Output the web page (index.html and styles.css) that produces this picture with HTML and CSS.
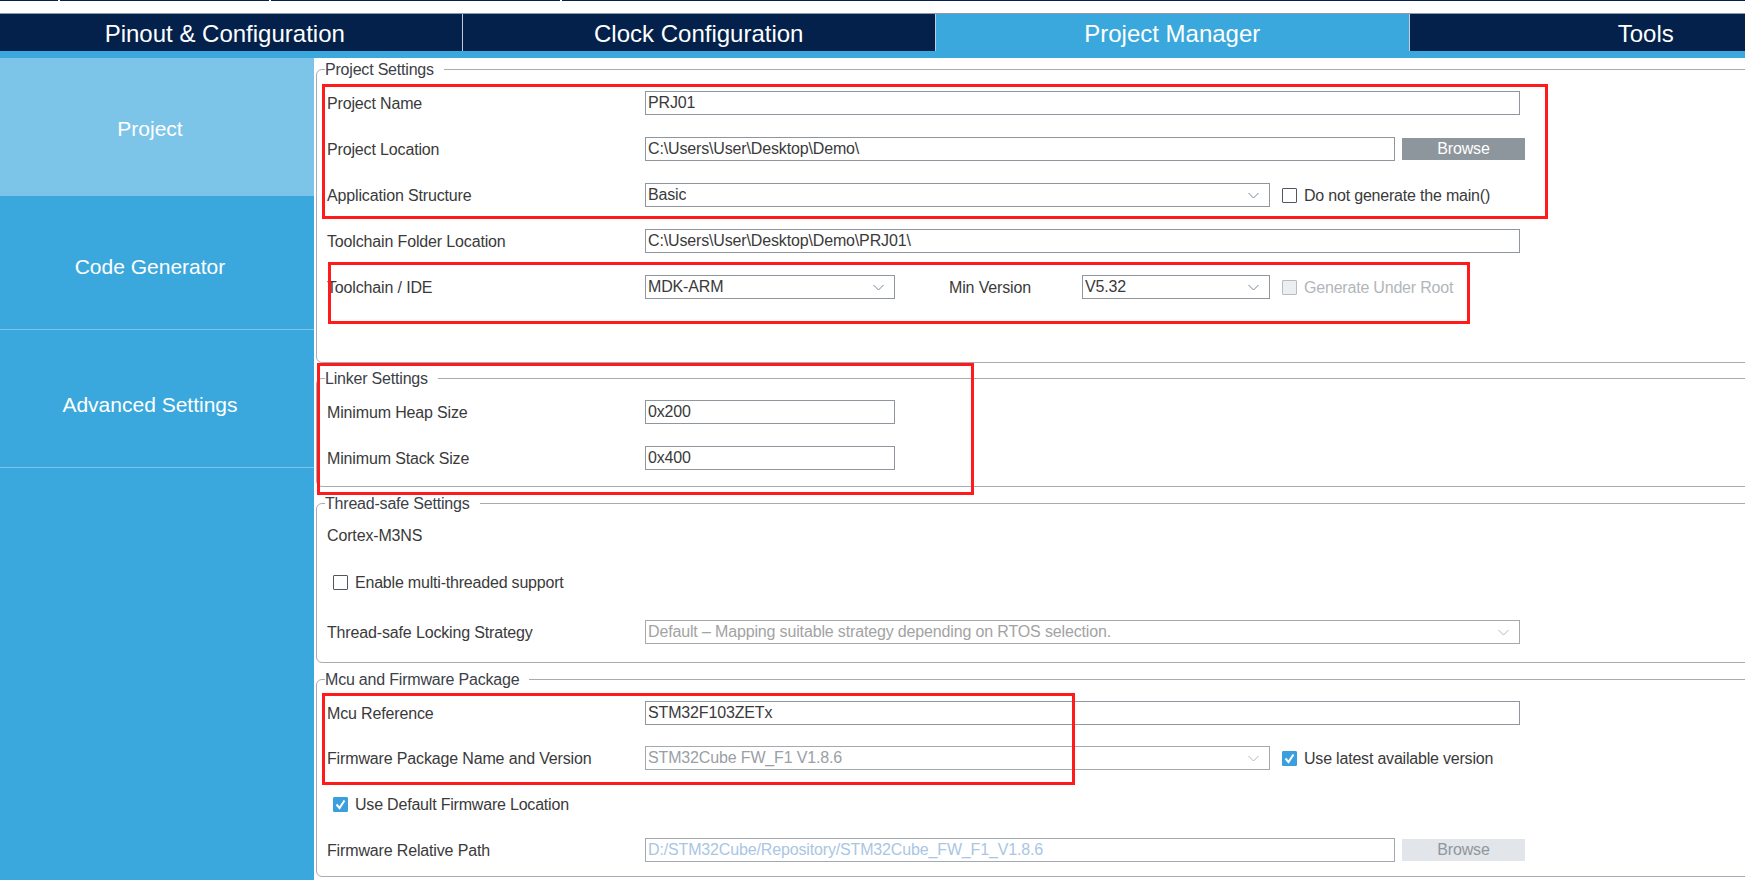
FILE: index.html
```html
<!DOCTYPE html>
<html lang="en">
<head>
<meta charset="utf-8">
<title>Project Manager</title>
<link rel="stylesheet" href="styles.css">
</head>
<body>
<div class="app">
  <div class="topline">
    <span class="seg s1"></span><span class="seg s2"></span><span class="seg s3"></span><span class="seg s4"></span>
  </div>
  <div class="tabbar">
    <div class="tab">Pinout &amp; Configuration</div>
    <div class="tab">Clock Configuration</div>
    <div class="tab active">Project Manager</div>
    <div class="tab">Tools</div>
  </div>
  <div class="strip"></div>
  <div class="main">
    <nav class="sidebar">
      <div class="nav-item active">Project</div>
      <div class="nav-item code">Code Generator</div>
      <div class="nav-item adv">Advanced Settings</div>
    </nav>
    <section class="content">
      <fieldset class="fs fs1">
        <legend>Project Settings</legend>
        <div class="row">
          <div class="label">Project Name</div>
          <div class="field w-full">PRJ01</div>
        </div>
        <div class="row">
          <div class="label">Project Location</div>
          <div class="field w-loc">C:\Users\User\Desktop\Demo\</div>
          <div class="btn">Browse</div>
        </div>
        <div class="row">
          <div class="label">Application Structure</div>
          <div class="field select w-sel"><span>Basic</span><svg class="chev" width="11" height="7" viewBox="0 0 11 7"><polyline points="0.5,1 5.5,6 10.5,1" fill="none" stroke="#7d858d" stroke-width="1"/></svg></div>
          <span class="check"></span><span class="check-text">Do not generate the main()</span>
        </div>
        <div class="row">
          <div class="label">Toolchain Folder Location</div>
          <div class="field w-full">C:\Users\User\Desktop\Demo\PRJ01\</div>
        </div>
        <div class="row">
          <div class="label">Toolchain / IDE</div>
          <div class="field select w-small"><span>MDK-ARM</span><svg class="chev" width="11" height="7" viewBox="0 0 11 7"><polyline points="0.5,1 5.5,6 10.5,1" fill="none" stroke="#7d858d" stroke-width="1"/></svg></div>
          <div class="minlabel">Min Version</div>
          <div class="field select w-ver"><span>V5.32</span><svg class="chev" width="11" height="7" viewBox="0 0 11 7"><polyline points="0.5,1 5.5,6 10.5,1" fill="none" stroke="#7d858d" stroke-width="1"/></svg></div>
          <span class="check disabled"></span><span class="check-text dim">Generate Under Root</span>
        </div>
      </fieldset>

      <fieldset class="fs fs2">
        <legend>Linker Settings</legend>
        <div class="row">
          <div class="label">Minimum Heap Size</div>
          <div class="field w-small">0x200</div>
        </div>
        <div class="row">
          <div class="label">Minimum Stack Size</div>
          <div class="field w-small">0x400</div>
        </div>
      </fieldset>

      <fieldset class="fs fs3">
        <legend>Thread-safe Settings</legend>
        <div class="row r42">
          <div class="label">Cortex-M3NS</div>
        </div>
        <div class="row r52">
          <span class="check indent"></span><span class="check-text">Enable multi-threaded support</span>
        </div>
        <div class="row r48">
          <div class="label">Thread-safe Locking Strategy</div>
          <div class="field select w-full off"><span class="muted">Default – Mapping suitable strategy depending on RTOS selection.</span><svg class="chev" width="11" height="7" viewBox="0 0 11 7"><polyline points="0.5,1 5.5,6 10.5,1" fill="none" stroke="#b3b8bd" stroke-width="1"/></svg></div>
        </div>
      </fieldset>

      <fieldset class="fs fs4">
        <legend>Mcu and Firmware Package</legend>
        <div class="row r45">
          <div class="label">Mcu Reference</div>
          <div class="field w-full">STM32F103ZETx</div>
        </div>
        <div class="row">
          <div class="label">Firmware Package Name and Version</div>
          <div class="field select w-sel off"><span class="muted2">STM32Cube FW_F1 V1.8.6</span><svg class="chev" width="11" height="7" viewBox="0 0 11 7"><polyline points="0.5,1 5.5,6 10.5,1" fill="none" stroke="#b3b8bd" stroke-width="1"/></svg></div>
          <span class="check on"><svg width="13" height="13" viewBox="0 0 13 13"><polyline points="2.5,6.5 5.5,10 10.5,2.5" fill="none" stroke="#fff" stroke-width="2"/></svg></span><span class="check-text">Use latest available version</span>
        </div>
        <div class="row">
          <span class="check on indent"><svg width="13" height="13" viewBox="0 0 13 13"><polyline points="2.5,6.5 5.5,10 10.5,2.5" fill="none" stroke="#fff" stroke-width="2"/></svg></span><span class="check-text">Use Default Firmware Location</span>
        </div>
        <div class="row">
          <div class="label">Firmware Relative Path</div>
          <div class="field w-loc off"><span class="muted-blue">D:/STM32Cube/Repository/STM32Cube_FW_F1_V1.8.6</span></div>
          <div class="btn disabled">Browse</div>
        </div>
      </fieldset>
    </section>
  </div>

  <div class="mark m1"></div>
  <div class="mark m2"></div>
  <div class="mark m3"></div>
  <div class="mark m4"></div>
</div>
</body>
</html>
```

FILE: styles.css
```css
* { box-sizing: border-box; }

html, body {
  margin: 0;
  padding: 0;
  background: #ffffff;
}

body {
  font-family: "Liberation Sans", Arial, sans-serif;
  color: #3a3a3a;
}

.app {
  position: relative;
  width: 1745px;
  height: 880px;
  overflow: hidden;
  background: #ffffff;
}

/* thin top line */
.topline {
  display: flex;
  gap: 2px;
  height: 13px;
}
.seg {
  display: block;
  height: 13px;
  border-top: 1px solid #03214a;
}
.s1 { width: 58px; }
.s2 { width: 209px; }
.s3 { width: 289px; }
.s4 { flex: 1; }

/* main tab bar */
.tabbar {
  display: flex;
  height: 38px;
  margin-left: -12px;
  border-top: 1px solid #8e9aab;
}
.tab {
  flex: 0 0 473.5px;
  display: flex;
  align-items: center;
  justify-content: center;
  background: #03214a;
  color: #ffffff;
  font-size: 24px;
  padding-top: 3px;
}
.tab + .tab {
  border-left: 1px solid #c3ccd6;
}
.tab.active {
  background: #3aa8dc;
}

.strip {
  height: 7px;
  background: #3aa8dc;
}

.main {
  display: flex;
  height: 822px;
}

/* left navigation */
.sidebar {
  flex: 0 0 314px;
  background: #3aa8dc;
}
.nav-item {
  display: flex;
  align-items: center;
  justify-content: center;
  color: #ffffff;
  font-size: 21px;
  padding-right: 14px;
}
.nav-item.active {
  height: 138px;
  padding-top: 4px;
  background: #7cc5e9;
}
.nav-item.code {
  height: 134px;
  padding-top: 8px;
  border-bottom: 1px solid #7cc5e9;
}
.nav-item.adv {
  height: 138px;
  padding-top: 12px;
  border-bottom: 1px solid #7cc5e9;
}

/* content */
.content {
  flex: 1;
  min-width: 0;
  padding-left: 2px;
  overflow: hidden;
  background: #ffffff;
}

.fs {
  margin: 5px -12px 0 0;
  padding: 0 0 5px 10px;
  border: 1px solid #a6acb3;
  border-radius: 6px;
  min-width: 0;
}
.fs1 { margin-top: 0; padding-bottom: 52px; }
.fs2 { margin-top: 4px; padding-bottom: 5px; }
.fs3 { padding-bottom: 6px; }
.fs4 { padding-bottom: 3px; }

.fs legend {
  margin-left: -2px;
  padding: 2px 10px 0 0;
  font-size: 16px;
  line-height: 20px;
  letter-spacing: -0.2px;
  color: #3c4047;
}

.row {
  display: flex;
  align-items: center;
  height: 46px;
  font-size: 16px;
  letter-spacing: -0.15px;
}
.r42 { height: 42px; }
.r45 { height: 45px; }
.r48 { height: 48px; }
.r52 { height: 52px; }

.label {
  flex: 0 0 318px;
  white-space: nowrap;
  color: #3a3a3a;
  padding-top: 2px;
}

.field {
  height: 24px;
  border: 1px solid #8f969d;
  padding: 0 2px;
  line-height: 22px;
  font-size: 16px;
  color: #3a3a3a;
  white-space: nowrap;
  overflow: hidden;
  background: #ffffff;
  flex-shrink: 0;
}
.field.off {
  border-color: #a3a9af;
}
.select {
  display: flex;
  align-items: center;
  justify-content: space-between;
}
.select span {
  overflow: hidden;
}
.chev {
  flex-shrink: 0;
  margin-right: 8px;
  margin-top: 1px;
}

.w-full { width: 875px; }
.w-loc { width: 750px; }
.w-sel { width: 625px; }
.w-small { width: 250px; }
.w-ver { width: 188px; }

.muted { color: #a3a3a3; }
.muted2 { color: #9aa0a6; }
.muted-blue { color: #a9c6e4; }

.btn {
  flex: 0 0 123px;
  height: 22px;
  margin-left: 7px;
  display: flex;
  align-items: center;
  justify-content: center;
  background: #8e969d;
  color: #ffffff;
  font-size: 16px;
}
.btn.disabled {
  background: #e2e5e9;
  color: #8f969d;
}

.minlabel {
  flex: 0 0 133px;
  margin-left: 54px;
  white-space: nowrap;
  padding-top: 2px;
}

.check {
  flex: 0 0 15px;
  width: 15px;
  height: 15px;
  margin-left: 12px;
  border: 1px solid #50575e;
  border-radius: 1px;
  background: #ffffff;
  display: flex;
  align-items: center;
  justify-content: center;
}
.check.indent { margin-left: 6px; }
.check.disabled {
  background: #eceef1;
  border-color: #b7bcc1;
}
.check.on {
  background: #3a9fdc;
  border-color: #3a9fdc;
}
.check-text {
  margin-left: 7px;
  padding-top: 2px;
  white-space: nowrap;
  color: #3a3a3a;
  letter-spacing: -0.2px;
}
.check-text.dim {
  color: #b2b6ba;
}

/* red annotation rectangles over the screenshot */
.mark {
  position: absolute;
  border: 3px solid #ff1b1b;
  pointer-events: none;
}
.m1 { left: 322px; top: 84px; width: 1226px; height: 135px; }
.m2 { left: 328px; top: 262px; width: 1142px; height: 62px; }
.m3 { left: 317px; top: 363px; width: 657px; height: 132px; }
.m4 { left: 322px; top: 693px; width: 753px; height: 92px; }
```
